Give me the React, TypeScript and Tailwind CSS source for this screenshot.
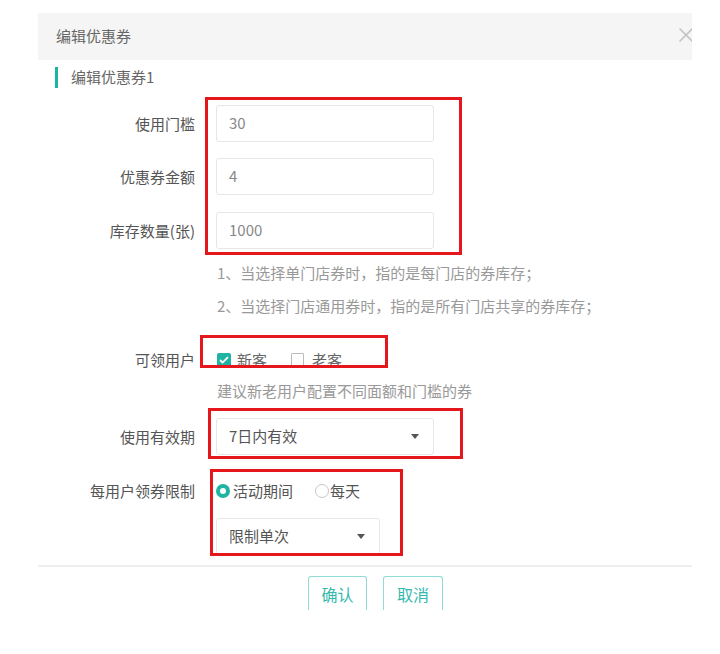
import { X } from "lucide-react";

const font = { fontFamily: '"Noto Sans CJK SC", "Liberation Sans", sans-serif' };

function Label({ children }: { children: React.ReactNode }) {
  return (
    <div className="w-[157px] shrink-0 text-right text-[15px] leading-[24px] text-[#555]">
      {children}
    </div>
  );
}

function TextInput({ value }: { value: string }) {
  return (
    <div className="ml-[21px] flex h-[37px] w-[218px] items-center rounded-[3px] border border-[#e6e6e6] pl-[12px] text-[15px] text-[#888]">
      {value}
    </div>
  );
}

function Select({ value, width }: { value: string; width: string }) {
  return (
    <div
      className={`flex h-[37px] ${width} items-center justify-between rounded-[3px] border border-[#e6e6e6] pl-[12px] pr-[14px] text-[15px] text-[#555]`}
    >
      <span>{value}</span>
      <svg width="8" height="5" viewBox="0 0 8 5">
        <path d="M0 0h8L4 5z" fill="#555" />
      </svg>
    </div>
  );
}

function Annotation({ className }: { className: string }) {
  return <div className={`pointer-events-none absolute border-[3px] border-[#e5161c] ${className}`} />;
}

export default function App() {
  return (
    <div className="relative h-[654px] w-[720px] overflow-hidden bg-white pt-[13px]" style={font}>
      <div className="ml-[38px] w-[654px]">
        {/* header */}
        <div className="flex h-[47px] items-center justify-between overflow-hidden bg-[#f5f5f5] pl-[18px]">
          <span className="text-[15px] text-[#666]">编辑优惠券</span>
          <X size={24} strokeWidth={1.7} className="mr-[-6px] mb-[4px] shrink-0 text-[#c4c4c4]" />
        </div>

        {/* section title */}
        <div className="mt-[7px] flex h-[21px] items-center">
          <div className="ml-[17px] h-[21px] w-[3px] bg-[#1bb5a5]" />
          <span className="ml-[13px] text-[15px] text-[#666]">编辑优惠券1</span>
        </div>

        {/* form */}
        <div className="mt-[17px]">
          <div className="flex items-center">
            <Label>使用门槛</Label>
            <TextInput value="30" />
          </div>
          <div className="mt-[16px] flex items-center">
            <Label>优惠券金额</Label>
            <TextInput value="4" />
          </div>
          <div className="mt-[17px] flex items-center">
            <Label>库存数量(张)</Label>
            <TextInput value="1000" />
          </div>

          <div className="mt-[7px] pl-[179px] text-[15px] leading-[33px] text-[#999]">
            <p>1、当选择单门店券时，指的是每门店的券库存；</p>
            <p>2、当选择门店通用券时，指的是所有门店共享的券库存；</p>
          </div>

          <div className="mt-[26px] flex items-center">
            <Label>可领用户</Label>
            <div className="ml-[22px] flex items-center text-[15px] leading-[24px] text-[#666]">
              <span className="flex h-[14px] w-[14px] items-center justify-center rounded-[2px] bg-[#1fb3a3]">
                <svg width="10" height="8" viewBox="0 0 10 8">
                  <path d="M1 4l2.6 2.6L9 1.2" fill="none" stroke="#fff" strokeWidth="1.8" />
                </svg>
              </span>
              <span className="ml-[6px]">新客</span>
              <span className="ml-[24px] h-[14px] w-[13px] rounded-[1px] border border-[#bbb]" />
              <span className="ml-[8px]">老客</span>
            </div>
          </div>

          <div className="mt-[7px] pl-[179px] text-[15px] leading-[24px] text-[#999]">
            建议新老用户配置不同面额和门槛的券
          </div>

          <div className="mt-[15px] flex items-center">
            <Label>使用有效期</Label>
            <div className="ml-[21px]">
              <Select value="7日内有效" width="w-[218px]" />
            </div>
          </div>

          <div className="mt-[24px] flex items-center">
            <Label>每用户领券限制</Label>
            <div className="ml-[21px] flex items-center text-[15px] leading-[24px] text-[#555]">
              <span className="h-[14px] w-[14px] rounded-full border-[4px] border-[#1fb3a3] bg-white" />
              <span className="ml-[3px]">活动期间</span>
              <span className="ml-[22px] h-[14px] w-[14px] rounded-full border border-[#c8c8c8]" />
              <span className="ml-[1px]">每天</span>
            </div>
          </div>

          <div className="mt-[15px] pl-[178px]">
            <Select value="限制单次" width="w-[164px]" />
          </div>
        </div>

        {/* footer */}
        <div className="mt-[10px] h-[2px] bg-[#eeeeee]" />
        <div className="mt-[9px] flex gap-[16px] pl-[270px]">
          <button className="h-[34px] w-[59px] rounded-t-[3px] border border-b-0 border-[#8fdcd4] text-[16px] text-[#35b9ad]">
            确认
          </button>
          <button className="h-[34px] w-[60px] rounded-t-[3px] border border-b-0 border-[#8fdcd4] text-[16px] text-[#35b9ad]">
            取消
          </button>
        </div>
      </div>

      {/* red annotation frames */}
      <Annotation className="left-[205px] top-[97px] h-[158px] w-[257px]" />
      <Annotation className="left-[200px] top-[335px] h-[33px] w-[188px]" />
      <Annotation className="left-[208px] top-[408px] h-[51px] w-[255px]" />
      <Annotation className="left-[210px] top-[469px] h-[87px] w-[193px]" />
    </div>
  );
}
